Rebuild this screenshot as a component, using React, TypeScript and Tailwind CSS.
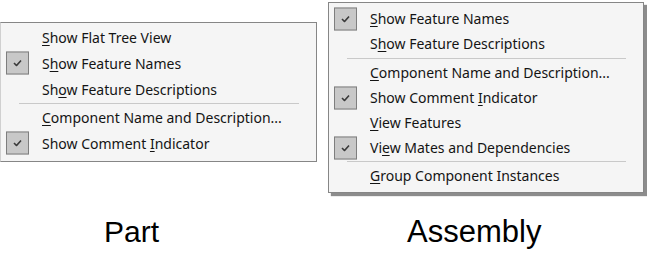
import React from "react";

type Item =
  | { kind: "item"; pre: string; key: string; post: string; checked?: boolean }
  | { kind: "sep"; h?: string };

const partItems: Item[] = [
  { kind: "item", pre: "", key: "S", post: "how Flat Tree View" },
  { kind: "item", pre: "S", key: "h", post: "ow Feature Names", checked: true },
  { kind: "item", pre: "Sh", key: "o", post: "w Feature Descriptions" },
  { kind: "sep", h: "h-[2px]" },
  { kind: "item", pre: "", key: "C", post: "omponent Name and Description..." },
  { kind: "item", pre: "Show Comment ", key: "I", post: "ndicator", checked: true },
];

const asmItems: Item[] = [
  { kind: "item", pre: "", key: "S", post: "how Feature Names", checked: true },
  { kind: "item", pre: "S", key: "h", post: "ow Feature Descriptions" },
  { kind: "sep", h: "h-[4px]" },
  { kind: "item", pre: "", key: "C", post: "omponent Name and Description..." },
  { kind: "item", pre: "Show Comment ", key: "I", post: "ndicator", checked: true },
  { kind: "item", pre: "", key: "V", post: "iew Features" },
  { kind: "item", pre: "Vi", key: "e", post: "w Mates and Dependencies", checked: true },
  { kind: "sep", h: "h-[3px]" },
  { kind: "item", pre: "", key: "G", post: "roup Component Instances" },
];

function Check() {
  return (
    <div className="absolute left-[5px] top-1/2 -translate-y-1/2 w-[23px] h-[23px] bg-[#c8c8c8] border border-[#7e7e7e] flex items-center justify-center">
      <svg width="9" height="7" viewBox="0 0 9 7">
        <path d="M1 3.5 L3.5 6 L8 1" fill="none" stroke="#3a3a3a" strokeWidth="1.6" />
      </svg>
    </div>
  );
}

function Menu({ items, rowH, className }: { items: Item[]; rowH: string; className: string }) {
  return (
    <div className={"bg-[#f5f5f5] border border-[#868686] flex flex-col " + className}>
      {items.map((it, i) =>
        it.kind === "sep" ? (
          <div key={i} className={"flex items-center " + (it.h ?? "h-[4px]")}>
            <div className="ml-[18px] mr-[17px] flex-1 h-px bg-[#c9c9c9]" />
          </div>
        ) : (
          <div key={i} className={"relative flex items-center pl-[41px] " + rowH}>
            {it.checked && <Check />}
            <span className="text-[14px] text-[#141414] whitespace-nowrap" style={{ fontFamily: '"Noto Sans", sans-serif' }}>
              {it.pre}
              <span className="underline underline-offset-[2px] decoration-1">{it.key}</span>
              {it.post}
            </span>
          </div>
        )
      )}
    </div>
  );
}

export default function App() {
  return (
    <div className="w-[647px] h-[260px] bg-white overflow-hidden">
      <div className="flex items-start h-[200px]">
        <Menu items={partItems} rowH="h-[26px]" className="mt-[22px] w-[317px] pt-px pb-[5px] border-l-[#d0d0d0]" />
        <Menu
          items={asmItems}
          rowH="h-[25px]"
          className="mt-[2px] ml-[11px] w-[316px] pt-[3px] pb-[4px] shadow-[3px_3px_1px_rgba(0,0,0,0.45)]"
        />
      </div>
      <div className="flex items-end mt-[16px] leading-none text-black" style={{ fontFamily: '"Liberation Sans", Arial, sans-serif' }}>
        <div className="ml-[104px] text-[30px]">Part</div>
        <div className="ml-[248px] text-[31px]">Assembly</div>
      </div>
    </div>
  );
}
